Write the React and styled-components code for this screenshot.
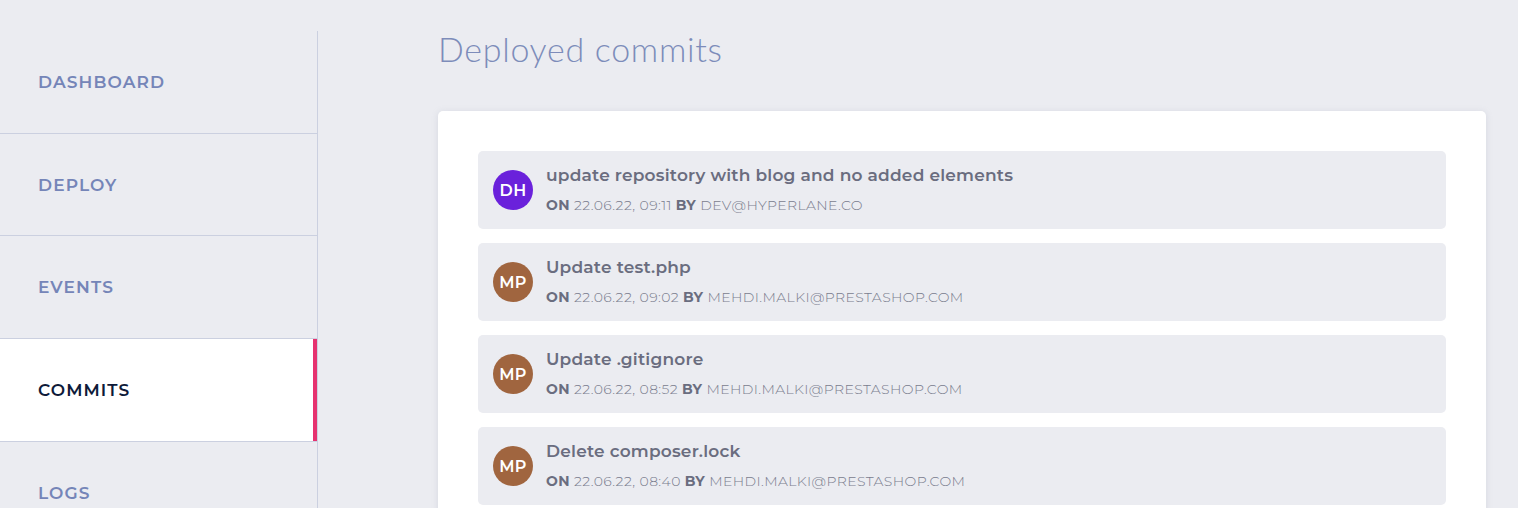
import React from 'react';
import styled, { createGlobalStyle } from 'styled-components';

const GlobalStyle = createGlobalStyle`
  html, body {
    margin: 0;
    padding: 0;
    background: #EBECF1;
    font-family: "Montserrat", Inter, "Liberation Sans", sans-serif;
  }
`

const Layout = styled.div`
  display: flex;
  width: 1518px;
  height: 508px;
  overflow: hidden;
`
const Sidebar = styled.nav`
  width: 317px;
  flex-shrink: 0;
  margin-top: 31px;
  border-right: 1px solid #CBD0E0;
`
const NavItem = styled.div`
  height: 101.7px;
  display: flex;
  align-items: center;
  padding-left: 38px;
  border-bottom: 1px solid #CBD0E0;
  font-size: 17px;
  font-weight: 600;
  letter-spacing: 1.1px;
  text-transform: uppercase;
  color: ${p => p.$active ? '#0E1A39' : '#7585B8'};
  background: ${p => p.$active ? '#FFFFFF' : 'transparent'};
  box-shadow: ${p => p.$active ? 'inset -4px 0 0 #E6326F' : 'none'};
`
const Main = styled.main`
  flex: 1;
  padding: 0 32px 0 120px;
`
const Title = styled.h1`
  margin: 29px 0 0;
  height: 40px;
  font-family: Lato, "Liberation Sans", sans-serif;
  font-weight: 300;
  font-size: 34px;
  letter-spacing: 0.7px;
  line-height: 40px;
  color: #7D8CBA;
`
const Card = styled.section`
  margin-top: 42px;
  background: #FFFFFF;
  border-radius: 5px;
  box-shadow: 0 1px 6px rgba(150, 155, 180, 0.25);
  padding: 40px;
  display: flex;
  flex-direction: column;
  gap: 14px;
`
const Commit = styled.article`
  height: 78px;
  box-sizing: border-box;
  background: #EBECF1;
  border-radius: 5px;
  display: flex;
  align-items: center;
  padding-left: 15px;
  gap: 13px;
`
const Avatar = styled.div`
  width: 40px;
  height: 40px;
  border-radius: 50%;
  flex-shrink: 0;
  background: ${p => p.$color};
  color: #FFFFFF;
  display: flex;
  align-items: center;
  justify-content: center;
  font-size: 16px;
  font-weight: 600;
  letter-spacing: 0.3px;
`
const Info = styled.div`
  display: flex;
  flex-direction: column;
  gap: 11px;
  margin-top: -2px;
`
const Message = styled.div`
  font-size: 17px;
  font-weight: 600;
  letter-spacing: 0.2px;
  color: #6A6D7F;
`
const Meta = styled.div`
  font-size: 14px;
  font-weight: 300;
  letter-spacing: 0.4px;
  color: #7A7D8E;
  b {
    font-weight: 700;
    color: #6A6D7F;
  }
`

const nav = ['Dashboard', 'Deploy', 'Events', 'Commits', 'Logs'];

const commits = [
  { initials: 'DH', color: '#6A21DB', message: 'update repository with blog and no added elements', date: '22.06.22, 09:11', author: 'DEV@HYPERLANE.CO' },
  { initials: 'MP', color: '#A0653F', message: 'Update test.php', date: '22.06.22, 09:02', author: 'MEHDI.MALKI@PRESTASHOP.COM' },
  { initials: 'MP', color: '#A0653F', message: 'Update .gitignore', date: '22.06.22, 08:52', author: 'MEHDI.MALKI@PRESTASHOP.COM' },
  { initials: 'MP', color: '#A0653F', message: 'Delete composer.lock', date: '22.06.22, 08:40', author: 'MEHDI.MALKI@PRESTASHOP.COM' },
];

function App() {
  return (
    <Layout>
      <GlobalStyle/>
      <Sidebar>
        {nav.map(item => (
          <NavItem key={item} $active={item === 'Commits'}>{item}</NavItem>
        ))}
      </Sidebar>
      <Main>
        <Title>Deployed commits</Title>
        <Card>
          {commits.map((c, i) => (
            <Commit key={i}>
              <Avatar $color={c.color}>{c.initials}</Avatar>
              <Info>
                <Message>{c.message}</Message>
                <Meta><b>ON</b> {c.date} <b>BY</b> {c.author}</Meta>
              </Info>
            </Commit>
          ))}
        </Card>
      </Main>
    </Layout>
  );
}

export default App;
